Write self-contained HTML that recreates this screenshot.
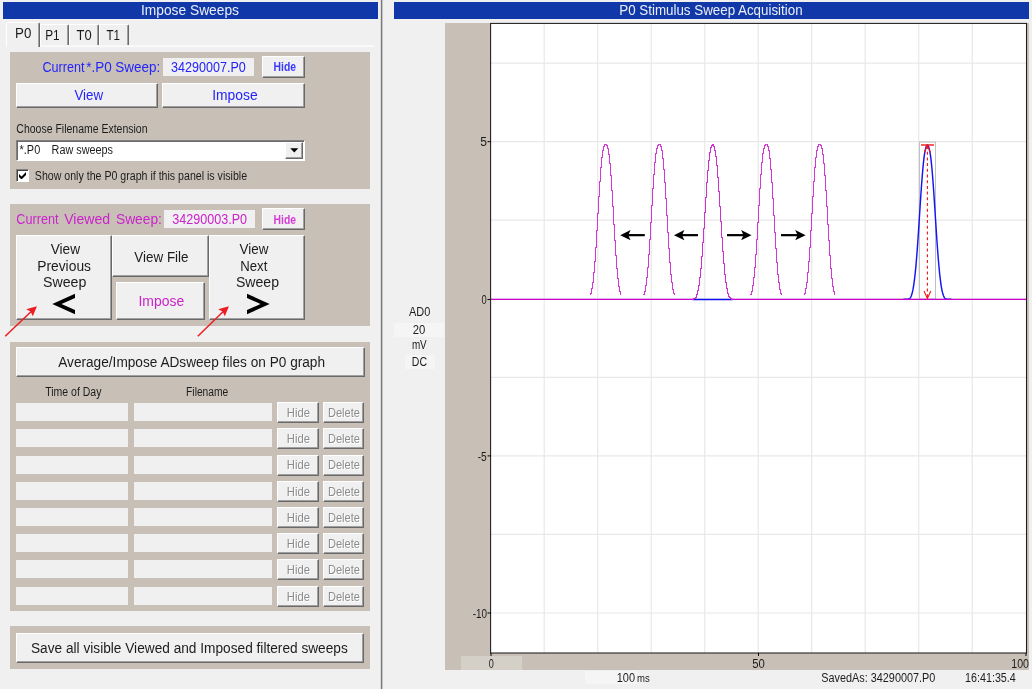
<!DOCTYPE html><html><head><meta charset="utf-8"><title>Impose Sweeps</title><style>
html,body{margin:0;padding:0;}
body{width:1032px;height:689px;background:#f0f0f0;position:relative;overflow:hidden;font-family:"Liberation Sans",sans-serif;font-size:12px;color:#000;}
.a{position:absolute;box-sizing:border-box;}
.tan{background:#c8c0b7;}
.title{background:#1038a8;height:17px;top:2px;}
.btn{background:#f0f0f0;border:1px solid;border-color:#fff #696969 #696969 #fff;box-shadow:inset -1px -1px 0 #a0a0a0;}
.fld{background:#f0f0f0;}
.t{position:absolute;left:0;top:0;white-space:pre;line-height:normal;transform-origin:0 0;}
.sunk{background:#fff;border:1px solid;border-color:#808080 #fff #fff #808080;box-shadow:inset 1px 1px 0 #404040;}
</style></head><body>
<div class="a title" style="left:3px;top:2px;width:375px;height:17px;"></div>
<div class="a" style="left:6px;top:45px;width:368px;height:1px;background:#f7f7f7;"></div><div class="a" style="left:6px;top:46px;width:368px;height:1px;background:#fbfbfb;"></div>
<div class="a" style="left:6px;top:22px;width:34px;height:25px;background:#f0f0f0;border-left:1px solid #fff;border-top:1px solid #fff;border-right:1px solid #696969;box-shadow:inset -1px 0 0 #a0a0a0;border-radius:2px 2px 0 0;"></div>
<div class="a" style="left:40px;top:24px;width:29px;height:21px;background:#f0f0f0;border-left:1px solid #fff;border-top:1px solid #fff;border-right:1px solid #696969;box-shadow:inset -1px 0 0 #a0a0a0;border-radius:2px 2px 0 0;"></div>
<div class="a" style="left:69px;top:24px;width:30px;height:21px;background:#f0f0f0;border-left:1px solid #fff;border-top:1px solid #fff;border-right:1px solid #696969;box-shadow:inset -1px 0 0 #a0a0a0;border-radius:2px 2px 0 0;"></div>
<div class="a" style="left:99px;top:24px;width:30px;height:21px;background:#f0f0f0;border-left:1px solid #fff;border-top:1px solid #fff;border-right:1px solid #696969;box-shadow:inset -1px 0 0 #a0a0a0;border-radius:2px 2px 0 0;"></div>
<div class="a tan" style="left:10px;top:52px;width:360px;height:137px;"></div>
<div class="a fld" style="left:163px;top:58px;width:91px;height:18px;"></div>
<div class="a btn" style="left:262px;top:56px;width:43px;height:22px;"></div>
<div class="a btn" style="left:16px;top:83px;width:142px;height:25px;"></div>
<div class="a btn" style="left:162px;top:83px;width:143px;height:25px;"></div>
<div class="a sunk" style="left:16px;top:140px;width:289px;height:21px;box-shadow:inset 1px 1px 0 #6a6a6a;"></div>
<div class="a btn" style="left:285px;top:142px;width:18px;height:17px;"></div>
<svg class="a" style="left:290px;top:147px;" width="9" height="6"><path d="M0.3 1.2h8L4.3 5.6z" fill="#000"/></svg>
<div class="a sunk" style="left:16px;top:169px;width:13px;height:13px;"></div>
<svg class="a" style="left:19px;top:172px;" width="7" height="7"><path d="M0 2v3l2.5 2.5L7 3V0L2.5 4.5z" fill="#000"/></svg>
<div class="a tan" style="left:10px;top:204px;width:360px;height:122px;"></div>
<div class="a fld" style="left:164px;top:210px;width:91px;height:18px;"></div>
<div class="a btn" style="left:262px;top:208px;width:43px;height:22px;"></div>
<div class="a btn" style="left:16px;top:235px;width:96px;height:85px;"></div>
<div class="a btn" style="left:112px;top:235px;width:97px;height:42px;"></div>
<div class="a btn" style="left:116px;top:282px;width:89px;height:38px;"></div>
<div class="a btn" style="left:209px;top:235px;width:96px;height:85px;"></div>
<svg class="a" style="left:0;top:285px;" width="320" height="40"><path d="M75 8.7V12.9L61.5 19L75 25.1V29.3L52.3 19z" fill="#000"/><path d="M247 8.7V12.9L260.5 19L247 25.1V29.3L269.7 19z" fill="#000"/></svg>
<svg class="a" style="left:0;top:295px;" width="260" height="50"><g stroke="#ed1c24" stroke-width="1.5" fill="#ed1c24"><line x1="5.2" y1="41.3" x2="32" y2="15.8"/><path d="M36.9 11.2L26.2 14.2L30.6 16.6L32.8 21.2z" stroke="none"/><line x1="197.8" y1="41.3" x2="224" y2="15.8"/><path d="M228.9 11.2L218.2 14.2L222.6 16.6L224.8 21.2z" stroke="none"/></g></svg>
<div class="a tan" style="left:10px;top:342px;width:360px;height:269px;"></div>
<div class="a btn" style="left:16px;top:347px;width:349px;height:30px;"></div>
<div class="a fld" style="left:16px;top:403px;width:112px;height:18px;"></div>
<div class="a fld" style="left:134px;top:403px;width:138px;height:18px;"></div>
<div class="a btn" style="left:277px;top:402px;width:42px;height:21px;"></div>
<div class="a btn" style="left:323px;top:402px;width:41px;height:21px;"></div>
<div class="a fld" style="left:16px;top:429px;width:112px;height:18px;"></div>
<div class="a fld" style="left:134px;top:429px;width:138px;height:18px;"></div>
<div class="a btn" style="left:277px;top:428px;width:42px;height:21px;"></div>
<div class="a btn" style="left:323px;top:428px;width:41px;height:21px;"></div>
<div class="a fld" style="left:16px;top:456px;width:112px;height:18px;"></div>
<div class="a fld" style="left:134px;top:456px;width:138px;height:18px;"></div>
<div class="a btn" style="left:277px;top:455px;width:42px;height:21px;"></div>
<div class="a btn" style="left:323px;top:455px;width:41px;height:21px;"></div>
<div class="a fld" style="left:16px;top:482px;width:112px;height:18px;"></div>
<div class="a fld" style="left:134px;top:482px;width:138px;height:18px;"></div>
<div class="a btn" style="left:277px;top:481px;width:42px;height:21px;"></div>
<div class="a btn" style="left:323px;top:481px;width:41px;height:21px;"></div>
<div class="a fld" style="left:16px;top:508px;width:112px;height:18px;"></div>
<div class="a fld" style="left:134px;top:508px;width:138px;height:18px;"></div>
<div class="a btn" style="left:277px;top:507px;width:42px;height:21px;"></div>
<div class="a btn" style="left:323px;top:507px;width:41px;height:21px;"></div>
<div class="a fld" style="left:16px;top:534px;width:112px;height:18px;"></div>
<div class="a fld" style="left:134px;top:534px;width:138px;height:18px;"></div>
<div class="a btn" style="left:277px;top:533px;width:42px;height:21px;"></div>
<div class="a btn" style="left:323px;top:533px;width:41px;height:21px;"></div>
<div class="a fld" style="left:16px;top:560px;width:112px;height:18px;"></div>
<div class="a fld" style="left:134px;top:560px;width:138px;height:18px;"></div>
<div class="a btn" style="left:277px;top:559px;width:42px;height:21px;"></div>
<div class="a btn" style="left:323px;top:559px;width:41px;height:21px;"></div>
<div class="a fld" style="left:16px;top:587px;width:112px;height:18px;"></div>
<div class="a fld" style="left:134px;top:587px;width:138px;height:18px;"></div>
<div class="a btn" style="left:277px;top:586px;width:42px;height:21px;"></div>
<div class="a btn" style="left:323px;top:586px;width:41px;height:21px;"></div>
<div class="a tan" style="left:10px;top:626px;width:360px;height:43px;"></div>
<div class="a btn" style="left:16px;top:633px;width:348px;height:30px;"></div>
<div class="a" style="left:380px;top:0;width:1px;height:689px;background:#dcdcdc;"></div><div class="a" style="left:381px;top:0;width:1px;height:689px;background:#787878;"></div><div class="a" style="left:382px;top:0;width:1px;height:689px;background:#c4c4c4;"></div>
<div class="a title" style="left:394px;top:2px;width:635px;height:17px;"></div>
<div class="a tan" style="left:445px;top:23px;width:584px;height:647px;"></div>
<div class="a" style="left:394px;top:323px;width:50px;height:14px;background:#f5f5f5;"></div>
<div class="a" style="left:405px;top:355px;width:30px;height:14px;background:#f5f5f5;"></div>
<svg class="a" style="left:0;top:0;" width="1032" height="689"><rect x="491" y="23" width="535" height="630" fill="#fff"/><g stroke="#e8e8e8" stroke-width="1.2"><line x1="544.2" y1="23" x2="544.2" y2="653"/><line x1="597.7" y1="23" x2="597.7" y2="653"/><line x1="651.2" y1="23" x2="651.2" y2="653"/><line x1="704.7" y1="23" x2="704.7" y2="653"/><line x1="758.2" y1="23" x2="758.2" y2="653"/><line x1="811.7" y1="23" x2="811.7" y2="653"/><line x1="865.2" y1="23" x2="865.2" y2="653"/><line x1="918.7" y1="23" x2="918.7" y2="653"/><line x1="972.2" y1="23" x2="972.2" y2="653"/><line x1="491" y1="63.1" x2="1026" y2="63.1"/><line x1="491" y1="141.7" x2="1026" y2="141.7"/><line x1="491" y1="220.2" x2="1026" y2="220.2"/><line x1="491" y1="298.8" x2="1026" y2="298.8"/><line x1="491" y1="377.3" x2="1026" y2="377.3"/><line x1="491" y1="455.9" x2="1026" y2="455.9"/><line x1="491" y1="534.4" x2="1026" y2="534.4"/><line x1="491" y1="613.0" x2="1026" y2="613.0"/></g><rect x="490.6" y="23.4" width="535.9" height="629.6" fill="none" stroke="#1c1c1c" stroke-width="1.05"/><g stroke="#000" stroke-width="1"><line x1="487.5" y1="141.7" x2="491" y2="141.7"/><line x1="487.5" y1="299.5" x2="491" y2="299.5"/><line x1="487.5" y1="455.9" x2="491" y2="455.9"/><line x1="487.5" y1="613.0" x2="491" y2="613.0"/><line x1="491" y1="653" x2="491" y2="656"/><line x1="758.5" y1="653" x2="758.5" y2="656"/><line x1="1026" y1="653" x2="1026" y2="656"/></g><rect x="919.5" y="142" width="16" height="157" fill="none" stroke="#c0c0c0" stroke-width="1"/><line x1="692.5" y1="299.5" x2="733" y2="299.5" stroke="#1010f0" stroke-width="1.5"/><polyline fill="none" stroke="#1414f4" stroke-width="1.45" points="903.40,299.2 903.90,299.2 904.40,299.2 904.90,299.2 905.40,299.2 905.90,299.2 906.40,299.2 906.90,299.2 907.40,299.2 907.90,299.1 908.40,299.0 908.90,298.9 909.40,298.6 909.90,298.2 910.40,297.6 910.90,296.8 911.40,295.6 911.90,294.1 912.40,292.2 912.90,289.9 913.40,287.1 913.90,283.9 914.40,280.2 914.90,276.0 915.40,271.3 915.90,266.1 916.40,260.3 916.90,254.0 917.40,247.3 917.90,240.2 918.40,232.8 918.90,225.1 919.40,217.3 919.90,209.5 920.40,201.8 920.90,194.3 921.40,187.1 921.90,180.3 922.40,174.0 922.90,168.3 923.40,163.2 923.90,158.7 924.40,154.9 924.90,151.8 925.40,149.3 925.90,147.4 926.40,146.0 926.90,145.3 927.40,145.0 927.90,145.3 928.40,146.0 928.90,147.4 929.40,149.3 929.90,151.8 930.40,154.9 930.90,158.7 931.40,163.2 931.90,168.3 932.40,174.0 932.90,180.3 933.40,187.1 933.90,194.3 934.40,201.8 934.90,209.5 935.40,217.3 935.90,225.1 936.40,232.8 936.90,240.2 937.40,247.3 937.90,254.0 938.40,260.3 938.90,266.0 939.40,271.3 939.90,276.0 940.40,280.2 940.90,283.9 941.40,287.1 941.90,289.8 942.40,292.2 942.90,294.1 943.40,295.6 943.90,296.7 944.40,297.6 944.90,298.2 945.40,298.6 945.90,298.9 946.40,299.0 946.90,299.1 947.40,299.2 947.90,299.2 948.40,299.2 948.90,299.2 949.40,299.2 949.90,299.2 950.40,299.2 950.90,299.2 951.40,299.2"/><line x1="491" y1="299.4" x2="693.5" y2="299.4" stroke="#cc00cc" stroke-width="1.4"/><line x1="732" y1="299.4" x2="1026" y2="299.4" stroke="#cc00cc" stroke-width="1.4"/><path fill="none" shape-rendering="crispEdges" stroke="#d438d4" stroke-width="1" d="M590.5 293V295M591.5 288V294M592.5 282V289M593.5 272V283M594.5 261V273M595.5 247V262M596.5 230V248M597.5 213V231M598.5 196V214M599.5 181V197M600.5 167V182M601.5 157V168M602.5 150V158M603.5 146V151M604.5 144V147M605.5 144V145M606.5 144V146M607.5 145V149M608.5 148V155M609.5 154V164M610.5 163V176M611.5 175V191M612.5 190V207M613.5 206V225M614.5 224V241M615.5 240V256M616.5 255V269M617.5 268V279M618.5 278V287M619.5 286V292M620.5 291V295"/><path fill="none" shape-rendering="crispEdges" stroke="#d438d4" stroke-width="1" d="M643.5 294V295M644.5 291V295M645.5 285V292M646.5 277V286M647.5 267V278M648.5 254V268M649.5 239V255M650.5 222V240M651.5 205V223M652.5 188V206M653.5 174V189M654.5 162V175M655.5 153V163M656.5 148V154M657.5 145V149M658.5 144V146M659.5 144V145M660.5 144V147M661.5 146V151M662.5 150V159M663.5 158V170M664.5 169V183M665.5 182V199M666.5 198V216M667.5 215V233M668.5 232V249M669.5 248V263M670.5 262V275M671.5 274V283M672.5 282V290M673.5 289V294M674.5 293V295"/><path fill="none" shape-rendering="crispEdges" stroke="#d438d4" stroke-width="1" d="M750.5 294V295M751.5 291V295M752.5 285V292M753.5 277V286M754.5 267V278M755.5 254V268M756.5 239V255M757.5 222V240M758.5 205V223M759.5 188V206M760.5 174V189M761.5 162V175M762.5 153V163M763.5 148V154M764.5 145V149M765.5 144V146M766.5 144V145M767.5 144V147M768.5 146V151M769.5 150V159M770.5 158V170M771.5 169V183M772.5 182V199M773.5 198V216M774.5 215V233M775.5 232V249M776.5 248V263M777.5 262V275M778.5 274V283M779.5 282V290M780.5 289V294M781.5 293V295"/><path fill="none" shape-rendering="crispEdges" stroke="#d438d4" stroke-width="1" d="M804.5 293V295M805.5 288V294M806.5 282V289M807.5 272V283M808.5 261V273M809.5 247V262M810.5 230V248M811.5 213V231M812.5 196V214M813.5 181V197M814.5 167V182M815.5 157V168M816.5 150V158M817.5 146V151M818.5 144V147M819.5 144V145M820.5 144V146M821.5 145V149M822.5 148V155M823.5 154V164M824.5 163V176M825.5 175V191M826.5 190V207M827.5 206V225M828.5 224V241M829.5 240V256M830.5 255V269M831.5 268V279M832.5 278V287M833.5 286V292M834.5 291V295"/><path fill="none" shape-rendering="crispEdges" stroke="#d030d0" stroke-width="1" d="M692.5 299V300M693.5 298V300M694.5 298V299M695.5 297V299M696.5 294V298M697.5 290V295M698.5 285V291M699.5 277V286M700.5 268V278M701.5 256V269M702.5 242V257M703.5 228V243M704.5 212V229M705.5 197V213M706.5 182V198M707.5 170V183M708.5 160V171M709.5 152V161M710.5 147V153M711.5 145V148M712.5 144V146M713.5 144V147M714.5 146V151M715.5 150V157M716.5 156V166M717.5 165V178M718.5 177V192M719.5 191V207M720.5 206V222M721.5 221V238M722.5 237V252M723.5 251V264M724.5 263V275M725.5 274V283M726.5 282V289M727.5 288V294M728.5 293V297M729.5 296V298M730.5 297V299M731.5 298V300M732.5 299V300"/><line x1="625.2" y1="235.15" x2="644.8" y2="235.15" stroke="#000" stroke-width="2.2"/><path d="M620.2 235.15L630.6 229.95000000000002L628.2 235.15L630.6 240.35z" fill="#000"/><line x1="679" y1="235.15" x2="698" y2="235.15" stroke="#000" stroke-width="2.2"/><path d="M674 235.15L684.4 229.95000000000002L682 235.15L684.4 240.35z" fill="#000"/><line x1="727" y1="235.15" x2="746.5" y2="235.15" stroke="#000" stroke-width="2.2"/><path d="M751.5 235.15L741.1 229.95000000000002L743.5 235.15L741.1 240.35z" fill="#000"/><line x1="781" y1="235.15" x2="800.6" y2="235.15" stroke="#000" stroke-width="2.2"/><path d="M805.6 235.15L795.2 229.95000000000002L797.6 235.15L795.2 240.35z" fill="#000"/><g stroke="#f41616" stroke-width="1.1" fill="none"><line x1="921" y1="145" x2="934" y2="145" stroke-width="1.4"/><line x1="927.4" y1="146" x2="927.4" y2="298" stroke-dasharray="3 2.7"/><path d="M924.4 152.5L927.4 145.5L930.4 152.5"/><path d="M924 291L927.4 298.5L930.8 291"/></g></svg>
<div class="a " style="left:461px;top:656px;width:61px;height:14px;background:#d4d0c8;"></div>
<div class="a " style="left:585px;top:671px;width:52px;height:13px;background:#f5f5f5;"></div>
<div class="a" style="left:0;top:0;width:1032px;height:689px;will-change:transform;">
<div class="t" style="font-size:14px;color:#eceef8;transform:translate(141.02px,2.30px) scaleX(0.983);">Impose Sweeps</div>
<div class="t" style="font-size:14px;color:#1c1c1c;transform:translate(15.05px,25.30px) scaleX(0.950);">P0</div>
<div class="t" style="font-size:14px;color:#1c1c1c;transform:translate(45.16px,27.30px) scaleX(0.844);">P1</div>
<div class="t" style="font-size:14px;color:#1c1c1c;transform:translate(76.50px,27.30px) scaleX(0.925);">T0</div>
<div class="t" style="font-size:14px;color:#1c1c1c;transform:translate(106.50px,27.30px) scaleX(0.825);">T1</div>
<div class="t" style="font-size:14px;color:#2424fa;transform:translate(42.50px,58.80px) scaleX(0.900);">Current</div>
<div class="t" style="font-size:14px;color:#2424fa;transform:translate(86.24px,58.80px) scaleX(0.964);">*.P0</div>
<div class="t" style="font-size:14px;color:#2424fa;transform:translate(115.24px,58.80px) scaleX(0.962);">Sweep:</div>
<div class="t" style="font-size:14px;color:#2424fa;transform:translate(171.05px,59.00px) scaleX(0.897);">34290007.P0</div>
<div class="t" style="font-size:12px;color:#3a3aff;transform:translate(273.54px,60.10px) scaleX(0.864);font-weight:bold;">Hide</div>
<div class="t" style="font-size:14px;color:#2424fa;transform:translate(74.40px,87.00px) scaleX(0.953);">View</div>
<div class="t" style="font-size:14px;color:#2424fa;transform:translate(212.21px,87.20px) scaleX(0.990);">Impose</div>
<div class="t" style="font-size:12px;color:#1c1c1c;transform:translate(16.33px,122.25px) scaleX(0.874);">Choose Filename Extension</div>
<div class="t" style="font-size:12px;color:#1c1c1c;transform:translate(19.59px,142.75px) scaleX(0.910);">*.P0</div>
<div class="t" style="font-size:12px;color:#1c1c1c;transform:translate(51.60px,142.75px) scaleX(0.903);">Raw sweeps</div>
<div class="t" style="font-size:12px;color:#1c1c1c;transform:translate(34.82px,168.60px) scaleX(0.884);">Show only the P0 graph if this panel is visible</div>
<div class="t" style="font-size:14px;color:#cc22cc;transform:translate(16.30px,211.25px) scaleX(0.903);">Current</div>
<div class="t" style="font-size:14px;color:#cc22cc;transform:translate(64.20px,211.25px) scaleX(1.007);">Viewed</div>
<div class="t" style="font-size:14px;color:#cc22cc;transform:translate(115.97px,211.25px) scaleX(0.984);">Sweep:</div>
<div class="t" style="font-size:14px;color:#cc22cc;transform:translate(172.30px,211.25px) scaleX(0.897);">34290003.P0</div>
<div class="t" style="font-size:12px;color:#d63cd6;transform:translate(273.54px,212.60px) scaleX(0.864);font-weight:bold;">Hide</div>
<div class="t" style="font-size:14px;color:#1c1c1c;transform:translate(50.70px,241.25px) scaleX(0.977);">View</div>
<div class="t" style="font-size:14px;color:#1c1c1c;transform:translate(37.21px,257.75px) scaleX(0.987);">Previous</div>
<div class="t" style="font-size:14px;color:#1c1c1c;transform:translate(42.94px,273.75px) scaleX(1.013);">Sweep</div>
<div class="t" style="font-size:14px;color:#1c1c1c;transform:translate(134.30px,248.75px) scaleX(0.959);">View File</div>
<div class="t" style="font-size:14px;color:#cc22cc;transform:translate(138.45px,293.25px) scaleX(0.995);">Impose</div>
<div class="t" style="font-size:14px;color:#1c1c1c;transform:translate(239.45px,241.25px) scaleX(0.960);">View</div>
<div class="t" style="font-size:14px;color:#1c1c1c;transform:translate(240.26px,257.75px) scaleX(0.939);">Next</div>
<div class="t" style="font-size:14px;color:#1c1c1c;transform:translate(235.94px,273.75px) scaleX(1.007);">Sweep</div>
<div class="t" style="font-size:14px;color:#1c1c1c;transform:translate(58.20px,354.00px) scaleX(0.975);">Average/Impose ADsweep files on P0 graph</div>
<div class="t" style="font-size:12px;color:#1c1c1c;transform:translate(45.20px,385.25px) scaleX(0.876);">Time of Day</div>
<div class="t" style="font-size:12px;color:#1c1c1c;transform:translate(186.09px,385.25px) scaleX(0.855);">Filename</div>
<div class="t" style="font-size:12px;color:#8c8c8c;transform:translate(286.76px,405.75px) scaleX(0.937);text-shadow:1px 1px 0 #fff;">Hide</div>
<div class="t" style="font-size:12px;color:#8c8c8c;transform:translate(328.03px,405.75px) scaleX(0.918);text-shadow:1px 1px 0 #fff;">Delete</div>
<div class="t" style="font-size:12px;color:#8c8c8c;transform:translate(286.76px,432.00px) scaleX(0.937);text-shadow:1px 1px 0 #fff;">Hide</div>
<div class="t" style="font-size:12px;color:#8c8c8c;transform:translate(328.03px,432.00px) scaleX(0.918);text-shadow:1px 1px 0 #fff;">Delete</div>
<div class="t" style="font-size:12px;color:#8c8c8c;transform:translate(286.76px,458.25px) scaleX(0.937);text-shadow:1px 1px 0 #fff;">Hide</div>
<div class="t" style="font-size:12px;color:#8c8c8c;transform:translate(328.03px,458.25px) scaleX(0.918);text-shadow:1px 1px 0 #fff;">Delete</div>
<div class="t" style="font-size:12px;color:#8c8c8c;transform:translate(286.76px,484.50px) scaleX(0.937);text-shadow:1px 1px 0 #fff;">Hide</div>
<div class="t" style="font-size:12px;color:#8c8c8c;transform:translate(328.03px,484.50px) scaleX(0.918);text-shadow:1px 1px 0 #fff;">Delete</div>
<div class="t" style="font-size:12px;color:#8c8c8c;transform:translate(286.76px,510.75px) scaleX(0.937);text-shadow:1px 1px 0 #fff;">Hide</div>
<div class="t" style="font-size:12px;color:#8c8c8c;transform:translate(328.03px,510.75px) scaleX(0.918);text-shadow:1px 1px 0 #fff;">Delete</div>
<div class="t" style="font-size:12px;color:#8c8c8c;transform:translate(286.76px,537.00px) scaleX(0.937);text-shadow:1px 1px 0 #fff;">Hide</div>
<div class="t" style="font-size:12px;color:#8c8c8c;transform:translate(328.03px,537.00px) scaleX(0.918);text-shadow:1px 1px 0 #fff;">Delete</div>
<div class="t" style="font-size:12px;color:#8c8c8c;transform:translate(286.76px,563.25px) scaleX(0.937);text-shadow:1px 1px 0 #fff;">Hide</div>
<div class="t" style="font-size:12px;color:#8c8c8c;transform:translate(328.03px,563.25px) scaleX(0.918);text-shadow:1px 1px 0 #fff;">Delete</div>
<div class="t" style="font-size:12px;color:#8c8c8c;transform:translate(286.76px,589.50px) scaleX(0.937);text-shadow:1px 1px 0 #fff;">Hide</div>
<div class="t" style="font-size:12px;color:#8c8c8c;transform:translate(328.03px,589.50px) scaleX(0.918);text-shadow:1px 1px 0 #fff;">Delete</div>
<div class="t" style="font-size:14px;color:#1c1c1c;transform:translate(30.97px,639.75px) scaleX(0.977);">Save all visible Viewed and Imposed filtered sweeps</div>
<div class="t" style="font-size:14px;color:#eceef8;transform:translate(619.25px,2.30px) scaleX(0.954);">P0 Stimulus Sweep Acquisition</div>
<div class="t" style="font-size:12px;color:#1c1c1c;transform:translate(409.00px,304.50px) scaleX(0.913);">AD0</div>
<div class="t" style="font-size:12px;color:#1c1c1c;transform:translate(412.76px,323.20px) scaleX(0.942);">20</div>
<div class="t" style="font-size:12px;color:#1c1c1c;transform:translate(411.88px,338.20px) scaleX(0.824);">mV</div>
<div class="t" style="font-size:12px;color:#1c1c1c;transform:translate(411.82px,355.30px) scaleX(0.875);">DC</div>
<div class="t" style="font-size:12px;color:#1c1c1c;transform:translate(480.20px,135.10px) scaleX(1.000);">5</div>
<div class="t" style="font-size:12px;color:#1c1c1c;transform:translate(481.50px,292.60px) scaleX(0.783);">0</div>
<div class="t" style="font-size:12px;color:#1c1c1c;transform:translate(477.70px,449.50px) scaleX(0.850);">-5</div>
<div class="t" style="font-size:12px;color:#1c1c1c;transform:translate(472.70px,607.00px) scaleX(0.826);">-10</div>
<div class="t" style="font-size:12px;color:#1c1c1c;transform:translate(488.70px,656.50px) scaleX(0.758);">0</div>
<div class="t" style="font-size:12px;color:#1c1c1c;transform:translate(752.16px,656.50px) scaleX(0.942);">50</div>
<div class="t" style="font-size:12px;color:#1c1c1c;transform:translate(1011.32px,656.50px) scaleX(0.884);">100</div>
<div class="t" style="font-size:12px;color:#1c1c1c;transform:translate(616.79px,670.70px) scaleX(0.911);">100</div>
<div class="t" style="font-size:11px;color:#1c1c1c;transform:translate(637.04px,671.70px) scaleX(0.864);">ms</div>
<div class="t" style="font-size:12px;color:#1c1c1c;transform:translate(821.30px,671.00px) scaleX(0.904);">SavedAs: 34290007.P0</div>
<div class="t" style="font-size:12px;color:#1c1c1c;transform:translate(965.06px,671.00px) scaleX(0.894);">16:41:35.4</div>
</div>
</body></html>
